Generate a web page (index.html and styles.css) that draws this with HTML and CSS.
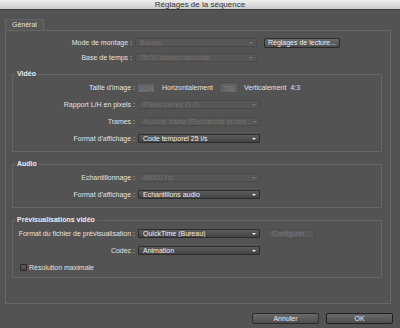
FILE: index.html
```html
<!DOCTYPE html>
<html lang="fr">
<head>
    <meta charset="UTF-8">
    <meta name="viewport" content="width=device-width, initial-scale=1.0">
    <title>Réglages de la séquence</title>
    <link rel="stylesheet" href="styles.css">
</head>
<body>

    <div class="titlebar">Réglages de la séquence</div>

    <div class="content">
        <div class="tabs">
            <div class="tab">Général</div>
        </div>

        <div class="panel">
            <div class="row">
                <span class="label">Mode de montage :</span>
                <div class="select disabled"><span>Bureau</span><i class="arrow"></i></div>
                <button class="btn side">Réglages de lecture...</button>
            </div>
            <div class="row">
                <span class="label">Base de temps :</span>
                <div class="select disabled"><span>25,00 images/seconde</span><i class="arrow"></i></div>
            </div>

            <fieldset class="group">
                <legend>Vidéo</legend>
                <div class="row">
                    <span class="label">Taille d'image :</span>
                    <span class="field">1024</span>
                    <span class="text gap8">Horizontalement</span>
                    <span class="field gap8">768</span>
                    <span class="text gap7">Verticalement</span>
                    <span class="text gap4">4:3</span>
                </div>
                <div class="row">
                    <span class="label">Rapport L/H en pixels :</span>
                    <div class="select disabled"><span>Pixels carrés (1,0)</span><i class="arrow"></i></div>
                </div>
                <div class="row">
                    <span class="label">Trames :</span>
                    <div class="select disabled"><span>Aucune trame (Recherche progre...</span><i class="arrow"></i></div>
                </div>
                <div class="row">
                    <span class="label">Format d'affichage :</span>
                    <div class="select"><span>Code temporel 25 i/s</span><i class="arrow"></i></div>
                </div>
            </fieldset>

            <fieldset class="group">
                <legend>Audio</legend>
                <div class="row">
                    <span class="label">Echantillonnage :</span>
                    <div class="select disabled"><span>48000 Hz</span><i class="arrow"></i></div>
                </div>
                <div class="row">
                    <span class="label">Format d'affichage :</span>
                    <div class="select"><span>Echantillons audio</span><i class="arrow"></i></div>
                </div>
            </fieldset>

            <fieldset class="group last">
                <legend>Prévisualisations vidéo</legend>
                <div class="row">
                    <span class="label">Format du fichier de prévisualisation :</span>
                    <div class="select"><span>QuickTime (Bureau)</span><i class="arrow"></i></div>
                    <button class="btn side small" disabled>Configurer...</button>
                </div>
                <div class="row">
                    <span class="label">Codec :</span>
                    <div class="select"><span>Animation</span><i class="arrow"></i></div>
                </div>
                <div class="row check-row">
                    <span class="checkbox"></span>
                    <span class="text">Résolution maximale</span>
                </div>
            </fieldset>
        </div>
    </div>

    <div class="footer">
        <button class="btn wide">Annuler</button>
        <button class="btn wide default">OK</button>
    </div>

</body>
</html>
```

FILE: styles.css
```css
* {
    box-sizing: border-box;
}

body {
    margin: 0;
    background-color: #535353;
    font-family: 'Liberation Sans', Arial, sans-serif;
    font-size: 7px;
    color: #e2e2e2;
}

.titlebar {
    height: 10px;
    line-height: 9px;
    text-align: center;
    font-size: 8px;
    color: #333;
    background: linear-gradient(#ededed, #cacaca);
    border-bottom: 1px solid #3b3b3b;
}

.content {
    padding: 9px 9px 0 5px;
}

.tabs {
    display: flex;
    height: 11px;
}

.tab {
    height: 11px;
    line-height: 10px;
    padding: 0 6px;
    border: 1px solid #666;
    border-bottom: none;
    border-radius: 2px 2px 0 0;
    background-color: #575757;
    color: #e0e0e0;
}

.panel {
    border: 1px solid #666;
    padding: 7px 8px 25px 6px;
}

.row {
    display: flex;
    align-items: center;
    height: 9px;
    margin-bottom: 6px;
}

.group .row {
    margin-bottom: 8px;
}

.group .row:last-child {
    margin-bottom: 0;
}

.label {
    width: 123px;
    padding-right: 3px;
    text-align: right;
    white-space: nowrap;
}

.group .label {
    width: 125px;
}

.text {
    white-space: nowrap;
}

.gap8 { margin-left: 8px; }
.gap7 { margin-left: 7px; }
.gap4 { margin-left: 4px; }

.group {
    margin: 8px 0 0 0;
    padding: 5px 0 8px 0;
    border: 1px solid #666;
    min-width: 0;
}

.group.last {
    padding-bottom: 6px;
}

.group legend {
    padding: 0 2px;
    margin-left: 2px;
    line-height: 8px;
    font-weight: bold;
    color: #ececec;
}

.select {
    display: flex;
    align-items: center;
    justify-content: space-between;
    width: 122px;
    height: 9px;
    padding: 0 3px 0 4px;
    border: 1px solid #2c2c2c;
    border-radius: 1px;
    background: linear-gradient(#5d5d5d, #434343);
    color: #f0f0f0;
    white-space: nowrap;
    overflow: hidden;
}

.select.disabled {
    border-color: #4a4a4a;
    background: #565656;
    color: #727272;
}

.arrow {
    flex: none;
    width: 0;
    height: 0;
    border-left: 2px solid transparent;
    border-right: 2px solid transparent;
    border-top: 2px solid #f0f0f0;
}

.select.disabled .arrow {
    border-top-color: #767676;
}

.field {
    width: 16px;
    height: 8px;
    line-height: 7px;
    border: 1px solid #666;
    background-color: #5d5d5d;
    color: #888;
    font-size: 6.5px;
    text-align: center;
}

.btn {
    height: 10px;
    padding: 0;
    border: 1px solid #2b2b2b;
    border-radius: 2px;
    background: linear-gradient(#6a6a6a, #4d4d4d);
    color: #ececec;
    font-family: inherit;
    font-size: 7px;
    line-height: 8px;
}

.btn.side {
    width: 76px;
    margin-left: 7px;
}

.btn.small {
    width: 48px;
}

.btn:disabled {
    border-color: #4b4b4b;
    background: #575757;
    color: #777;
}

.check-row {
    height: 8px;
    padding-left: 7px;
}

.checkbox {
    width: 7px;
    height: 7px;
    margin-right: 2px;
    border: 1px solid #2b2b2b;
    border-radius: 1px;
    background: linear-gradient(#5e5e5e, #444);
}

.footer {
    display: flex;
    justify-content: flex-end;
    gap: 7px;
    padding: 9px 7px 0 0;
}

.btn.wide {
    width: 67px;
    height: 11px;
}

.btn.default {
    border-color: #1f1f1f;
}
```
